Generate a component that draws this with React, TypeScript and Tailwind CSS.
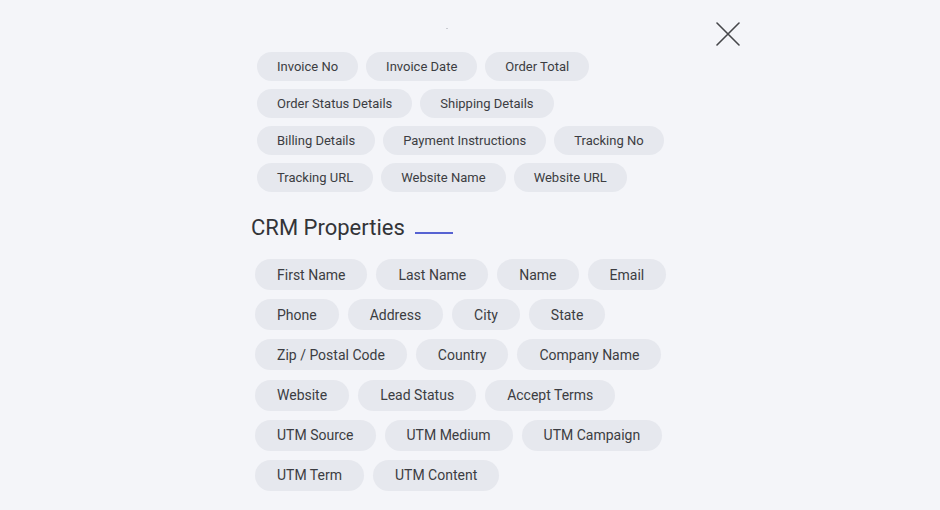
import React from "react";

const top = [
  "Invoice No",
  "Invoice Date",
  "Order Total",
  "Order Status Details",
  "Shipping Details",
  "Billing Details",
  "Payment Instructions",
  "Tracking No",
  "Tracking URL",
  "Website Name",
  "Website URL",
];

const crm = [
  "First Name",
  "Last Name",
  "Name",
  "Email",
  "Phone",
  "Address",
  "City",
  "State",
  "Zip / Postal Code",
  "Country",
  "Company Name",
  "Website",
  "Lead Status",
  "Accept Terms",
  "UTM Source",
  "UTM Medium",
  "UTM Campaign",
  "UTM Term",
  "UTM Content",
];

export default function App() {
  return (
    <div
      className="relative w-[940px] h-[510px] bg-[#f4f5f9] overflow-hidden text-[#3c3d42]"
      style={{ fontFamily: "Roboto, 'Liberation Sans', sans-serif" }}
    >
      <div className="absolute left-[446px] top-[28px] w-[2px] h-[1px] bg-[#c9cbd2]" />
      <button className="absolute left-[714px] top-[20px] w-[28px] h-[28px] flex items-center justify-center">
        <svg width="24" height="24" viewBox="0 0 24 24" fill="none">
          <path d="M1 1L23 23M23 1L1 23" stroke="#45464a" strokeWidth="1.6" strokeLinecap="round" />
        </svg>
      </button>

      <div className="pt-[52px] pl-[257px]">
        <div className="flex flex-wrap w-[416px] gap-x-[8px] gap-y-[8px]">
          {top.map((t) => (
            <span
              key={t}
              className="h-[29px] px-[20px] flex items-center rounded-full bg-[#e6e8ee] text-[13px] leading-none"
            >
              {t}
            </span>
          ))}
        </div>
      </div>

      <div className="pl-[251px] mt-[23px] flex items-center">
        <h2 className="text-[22px] leading-[26px] text-[#333438]">CRM Properties</h2>
        <div className="ml-[10px] mt-[10px] w-[38px] h-[2px] bg-[#5662d2]" />
      </div>

      <div className="pl-[255px] mt-[18px]">
        <div className="flex flex-wrap w-[440px] gap-x-[9px] gap-y-[9.2px]">
          {crm.map((t) => (
            <span
              key={t}
              className="h-[31px] px-[22px] flex items-center rounded-full bg-[#e6e8ee] text-[14px] leading-none"
            >
              {t}
            </span>
          ))}
        </div>
      </div>
    </div>
  );
}
